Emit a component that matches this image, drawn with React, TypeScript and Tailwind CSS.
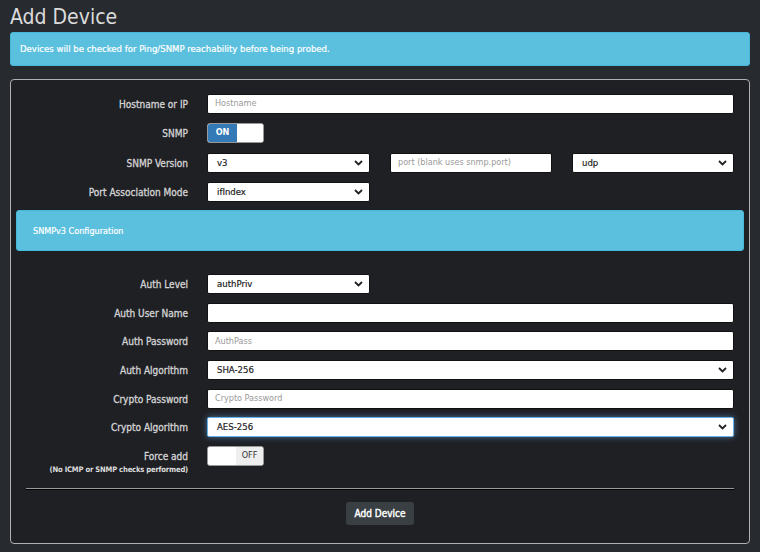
import { useState } from "react";

const font = { fontFamily: '"DejaVu Sans Condensed", "DejaVu Sans", sans-serif' };

function Chevron() {
  return (
    <svg width="9" height="6" viewBox="0 0 9 6" className="absolute right-[6px] top-1/2 -translate-y-1/2">
      <path d="M1 1l3.5 3.5L8 1" fill="none" stroke="#222" strokeWidth="1.8" />
    </svg>
  );
}

function Select({ value, width, focused }: { value: string; width?: string; focused?: boolean }) {
  return (
    <div
      className={`relative h-[20px] bg-white rounded-[2px] flex items-center pl-[9px] text-[9.5px] text-[#222] [-webkit-text-stroke:0.2px_#222] ${width ?? "flex-1"} ${
        focused ? "border border-[#66afe9] shadow-[0_0_6px_rgba(102,175,233,0.6)]" : "border border-[#111]"
      }`}
    >
      {value}
      <Chevron />
    </div>
  );
}

function Input({ placeholder, width }: { placeholder?: string; width?: string }) {
  return (
    <div
      className={`h-[20px] bg-white rounded-[2px] border border-[#111] flex items-center pl-[7px] text-[9px] text-[#999] ${width ?? "flex-1"}`}
    >
      {placeholder}
    </div>
  );
}

function Toggle({ on }: { on: boolean }) {
  return (
    <div className="w-[57px] h-[20px] rounded-[3px] border border-[#999] bg-white flex overflow-hidden text-[9px]">
      {on ? (
        <>
          <div className="w-[29px] bg-[#337ab7] text-white font-bold flex items-center justify-center">ON</div>
          <div className="flex-1 bg-white" />
        </>
      ) : (
        <>
          <div className="w-[28px] bg-white" />
          <div className="flex-1 bg-[#eeeeee] text-[#333] flex items-center justify-center">OFF</div>
        </>
      )}
    </div>
  );
}

function Row({ label, children, sub }: { label: string; children: React.ReactNode; sub?: string }) {
  return (
    <div className="flex items-start">
      <div className="w-[172px] text-right text-[10px] text-[#d4d4d4] [-webkit-text-stroke:0.3px_#d4d4d4]">
        <div className="pt-[1px] leading-[19px]">{label}</div>
        {sub && (
          <div className="text-[7.6px] leading-[10px] font-bold text-[#dddddd] -mt-[1px] tracking-[-0.2px] [-webkit-text-stroke:0px]">
            {sub}
          </div>
        )}
      </div>
      <div className="ml-[19px] flex-1 flex gap-[20px]">{children}</div>
    </div>
  );
}

export default function App() {
  const [forceAdd] = useState(false);

  return (
    <div className="w-[760px] h-[552px] bg-[#272a2f] px-[10px] pt-[4px] overflow-hidden" style={font}>
      <h1 className="text-[21px] leading-[26px] text-[#dcdcdc] font-normal">Add Device</h1>
      <div className="mt-[2px] h-[34px] rounded-[3px] bg-[#5bc0de] border border-[#46b8da] flex items-center pl-[9px] text-[9.5px] text-white [-webkit-text-stroke:0.2px_#fff]">
        Devices will be checked for Ping/SNMP reachability before being probed.
      </div>

      <div className="mt-[13px] h-[465px] rounded-[4px] border border-[#b0b0b0] bg-[#1f2024] px-[5px] pt-[14px]">
        <div className="flex flex-col gap-[9px] pr-[10px]">
          <Row label="Hostname or IP">
            <Input placeholder="Hostname" />
          </Row>
          <Row label="SNMP">
            <Toggle on />
          </Row>
          <div className="pt-[1px]">
            <Row label="SNMP Version">
              <Select value="v3" width="w-[163px]" />
              <Input placeholder="port (blank uses snmp.port)" width="w-[162px]" />
              <Select value="udp" width="flex-1" />
            </Row>
          </div>
          <Row label="Port Association Mode">
            <Select value="ifIndex" width="w-[163px]" />
          </Row>
        </div>

        <div className="mt-[8px] h-[41px] rounded-[3px] bg-[#5bc0de] border border-[#46b8da] flex items-center pt-[3px] pl-[16px] text-[9px] text-white [-webkit-text-stroke:0.2px_#fff]">
          SNMPv3 Configuration
        </div>

        <div className="mt-[23px] flex flex-col gap-[8.7px] pr-[10px]">
          <Row label="Auth Level">
            <Select value="authPriv" width="w-[163px]" />
          </Row>
          <Row label="Auth User Name">
            <Input />
          </Row>
          <Row label="Auth Password">
            <Input placeholder="AuthPass" />
          </Row>
          <Row label="Auth Algorithm">
            <Select value="SHA-256" />
          </Row>
          <Row label="Crypto Password">
            <Input placeholder="Crypto Password" />
          </Row>
          <Row label="Crypto Algorithm">
            <Select value="AES-256" focused />
          </Row>
          <Row label="Force add" sub="(No ICMP or SNMP checks performed)">
            <Toggle on={forceAdd} />
          </Row>
        </div>

        <div className="mt-[13px] mx-[10px] border-t border-[#9a9a9a] border-b border-b-black" />

        <div className="flex justify-center mt-[12px]">
          <button className="h-[23px] px-[8px] rounded-[3px] bg-[#3a3f44] text-[10px] text-white [-webkit-text-stroke:0.4px_#fff]">
            Add Device
          </button>
        </div>
      </div>
    </div>
  );
}
